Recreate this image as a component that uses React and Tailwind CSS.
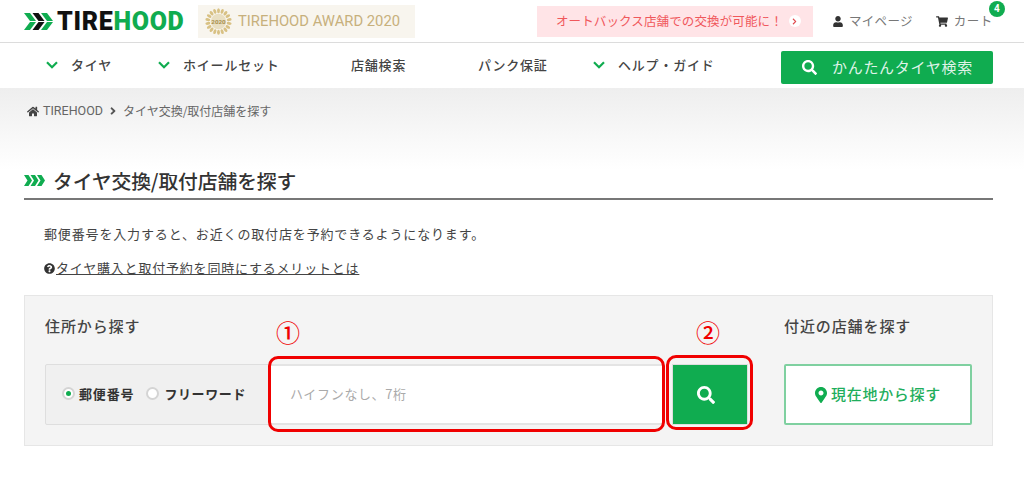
import { FaHome, FaUser, FaShoppingCart, FaSearch, FaMapMarkerAlt, FaQuestionCircle, FaAngleRight, FaChevronRight } from 'react-icons/fa'

const jp = "font-['Noto_Sans_CJK_JP','Noto_Sans',sans-serif]"

function Chevrons({ className }) {
  // three slanted arrows, same shape as the logo mark
  const shape = (x, fill) => (
    <g key={x} fill={fill}>
      <polygon points={`${x},0 ${x + 6},0 ${x + 12},8 ${x + 6},8`} />
      <polygon points={`${x},17 ${x + 6},17 ${x + 12},9 ${x + 6},9`} />
    </g>
  )
  return (
    <svg viewBox="0 0 29 17" className={className}>
      {shape(0, '#10ac50')}
      {shape(8.5, '#111111')}
      {shape(17, '#10ac50')}
    </svg>
  )
}

function TitleMark() {
  const shape = (x) => (
    <polygon key={x} points={`${x},0 ${x + 4.5},0 ${x + 8},5.5 ${x + 4.5},11 ${x},11 ${x + 3.5},5.5`} fill="#10ac50" />
  )
  return (
    <svg viewBox="0 0 21 11" className="w-[21px] h-[11px] shrink-0">
      {shape(0)}
      {shape(6.5)}
      {shape(13)}
    </svg>
  )
}

function Medal() {
  const leaves = Array.from({ length: 18 }, (_, i) => i * 20)
  return (
    <svg viewBox="0 0 28 28" className="w-[27px] h-[27px] shrink-0">
      {leaves.map((a) => (
        <ellipse key={a} cx="14" cy="2.8" rx="1.5" ry="2.6" fill="#d8c184" transform={`rotate(${a} 14 14)`} />
      ))}
      <circle cx="14" cy="14" r="8" fill="#e9dfc2" />
      <text x="14" y="16.5" textAnchor="middle" fontSize="6.5" fontWeight="700" fill="#a8904f" fontFamily="Roboto, sans-serif">2020</text>
    </svg>
  )
}

function NavItem({ label, chevron, width }) {
  return (
    <a className={`flex items-center pb-[2px] ${width}`}>
      {chevron && (
        <svg viewBox="0 0 12 8" className="w-[12px] h-[8px] mr-[13px] shrink-0" fill="none" stroke="#10ac50" strokeWidth="2.2">
          <path d="M1 1.2 L6 6.2 L11 1.2" />
        </svg>
      )}
      <span className="text-[13px] font-medium tracking-[0.8px] text-[#444]">{label}</span>
    </a>
  )
}

export default function App() {
  return (
    <div className={`w-[1024px] h-[478px] overflow-hidden bg-white ${jp}`}>
      {/* top header */}
      <header className="flex h-[43px] items-center border-b border-[#dcdcdc] pl-[24px]">
        <Chevrons className="w-[29px] h-[17px] shrink-0" />
        <span className="ml-[4px] w-[129px] whitespace-nowrap text-[25px] leading-none font-black font-['Roboto',sans-serif] tracking-[0.7px]">
          <span className="text-[#111]">TIRE</span>
          <span className="text-[#10ac50]">HOOD</span>
        </span>
        <div className="ml-[12px] flex h-[33px] w-[217px] items-center bg-[#f8f5ee] pl-[7px]">
          <Medal />
          <span className="ml-[6px] text-[14.8px] font-['Roboto',sans-serif] text-[#c7b07c] whitespace-nowrap">TIREHOOD AWARD 2020</span>
        </div>
        <div className="ml-[122px] flex h-[31px] w-[276px] items-center bg-[#ffe4e7] pl-[19px]">
          <span className="text-[12.5px] tracking-[0.12px] text-[#f0585c] whitespace-nowrap">オートバックス店舗での交換が可能に！</span>
          <span className="ml-[6px] flex h-[12px] w-[12px] items-center justify-center rounded-full bg-white text-[#e0484c]">
            <FaChevronRight className="w-[7px] h-[7px]" />
          </span>
        </div>
        <div className="ml-[20px] flex items-center text-[#777]">
          <FaUser className="w-[10px] h-[11px] text-[#333]" />
          <span className="ml-[6px] text-[12.5px] tracking-[0.3px]">マイページ</span>
        </div>
        <div className="relative ml-[23px] flex items-center text-[#777]">
          <FaShoppingCart className="w-[12px] h-[11px] text-[#333]" />
          <span className="ml-[6px] text-[12.5px] tracking-[0.5px]">カート</span>
          <span className="absolute left-[53px] -top-[11px] flex h-[16px] w-[16px] items-center justify-center rounded-full bg-[#10ac50] font-['Roboto',sans-serif] text-[10px] font-bold text-white">4</span>
        </div>
      </header>

      {/* main nav */}
      <nav className="flex h-[45px] items-center pl-[46px]">
        <NavItem label="タイヤ" chevron width="w-[112px]" />
        <NavItem label="ホイールセット" chevron width="w-[193px]" />
        <NavItem label="店舗検索" width="w-[127px]" />
        <NavItem label="パンク保証" width="w-[115px]" />
        <NavItem label="ヘルプ・ガイド" chevron width="w-[188px]" />
        <a className="mt-[4px] flex h-[33px] w-[212px] items-center rounded-[2px] bg-[#10ac50] pl-[21px] text-white">
          <FaSearch className="w-[15px] h-[15px]" />
          <span className="ml-[15px] text-[15px] tracking-[0.7px] text-[#dff3e7]">かんたんタイヤ検索</span>
        </a>
      </nav>

      {/* breadcrumb */}
      <div className="h-[82px] bg-gradient-to-b from-[#eeeeee] to-white pl-[27px] pt-[14px]">
        <div className="flex items-center text-[12px] text-[#666]">
          <FaHome className="w-[12px] h-[11px] text-[#444]" />
          <span className="ml-[4px] text-[12.5px] font-['Roboto',sans-serif]">TIREHOOD</span>
          <FaAngleRight className="mx-[5px] w-[10px] h-[12px] text-[#555]" />
          <span>タイヤ交換/取付店舗を探す</span>
        </div>
      </div>

      {/* page content */}
      <main className="pl-[24px] pr-[31px]">
        <h1 className="flex h-[30px] items-center gap-[8px] border-b-2 border-[#777] pb-[7px] text-[19.8px] font-medium leading-none tracking-[-0.1px] text-[#333]">
          <TitleMark />
          タイヤ交換/取付店舗を探す
        </h1>
        <p className="mt-[24px] pl-[20px] text-[13px] leading-[20px] tracking-[0.85px] text-[#444]">
          郵便番号を入力すると、お近くの取付店を予約できるようになります。
        </p>
        <p className="mt-[14px] flex items-center pl-[20px] text-[13px] leading-[20px] tracking-[0.8px] text-[#444]">
          <FaQuestionCircle className="w-[11px] h-[11px] mr-[1px] text-[#333]" />
          <span className="underline">タイヤ購入と取付予約を同時にするメリットとは</span>
        </p>

        {/* search panel */}
        <section className="relative mt-[17px] flex h-[151px] w-[969px] border border-[#e6e6e6] bg-[#f4f4f4] pl-[20px] pt-[20px]">
          <div className="w-[739px]">
            <h2 className="text-[15px] font-medium leading-[20px] tracking-[0.9px] text-[#444]">住所から探す</h2>
            <div className="mt-[28px] flex h-[61px]">
              <div className="flex w-[225px] items-center rounded-l-[2px] border border-[#dedede] bg-[#f0f0f0] pb-[2px] pl-[16px] text-[13px] font-bold tracking-[0.85px] text-[#333]">
                <span className="flex h-[13px] w-[13px] items-center justify-center rounded-full border-2 border-[#d4d4d4] bg-white">
                  <span className="h-[5px] w-[5px] rounded-full bg-[#10ac50]" />
                </span>
                <span className="ml-[4px]">郵便番号</span>
                <span className="ml-[12px] h-[13px] w-[13px] rounded-full border-2 border-[#d4d4d4] bg-white" />
                <span className="ml-[5px] whitespace-nowrap tracking-[0.6px]">フリーワード</span>
              </div>
              <div className="flex w-[392px] items-center border-y-2 border-[#e4e4e4] bg-white pb-[1px] pl-[20px] text-[13px] tracking-[0.6px] text-[#aaa]">
                ハイフンなし、7桁
              </div>
              <button className="ml-[10px] flex w-[76px] items-center justify-center border border-[#dedede] bg-[#10ac50] pr-[8px] text-white">
                <FaSearch className="w-[18px] h-[18px]" />
              </button>
            </div>
          </div>
          <div className="w-[188px]">
            <h2 className="text-[15px] font-medium leading-[20px] tracking-[0.9px] text-[#444]">付近の店舗を探す</h2>
            <a className="mt-[28px] flex h-[61px] items-center justify-center rounded-[2px] border-2 border-[#7fd0a0] bg-white text-[15px] font-medium tracking-[0.7px] text-[#1fae5c]">
              <FaMapMarkerAlt className="w-[12px] h-[16px] mr-[4px] text-[#10ac50]" />
              現在地から探す
            </a>
          </div>

          {/* red annotations on top of the form */}
          <span className="absolute left-[251px] top-[24px] text-[24px] font-medium leading-none text-[#f00000]">①</span>
          <span className="absolute left-[671px] top-[24px] text-[24px] font-medium leading-none text-[#f00000]">②</span>
          <span className="absolute left-[243px] top-[60px] h-[76px] w-[397px] rounded-[10px] border-[3px] border-[#f00000]" />
          <span className="absolute left-[641px] top-[59px] h-[75px] w-[87px] rounded-[10px] border-[3px] border-[#f00000]" />
        </section>
      </main>
    </div>
  )
}
